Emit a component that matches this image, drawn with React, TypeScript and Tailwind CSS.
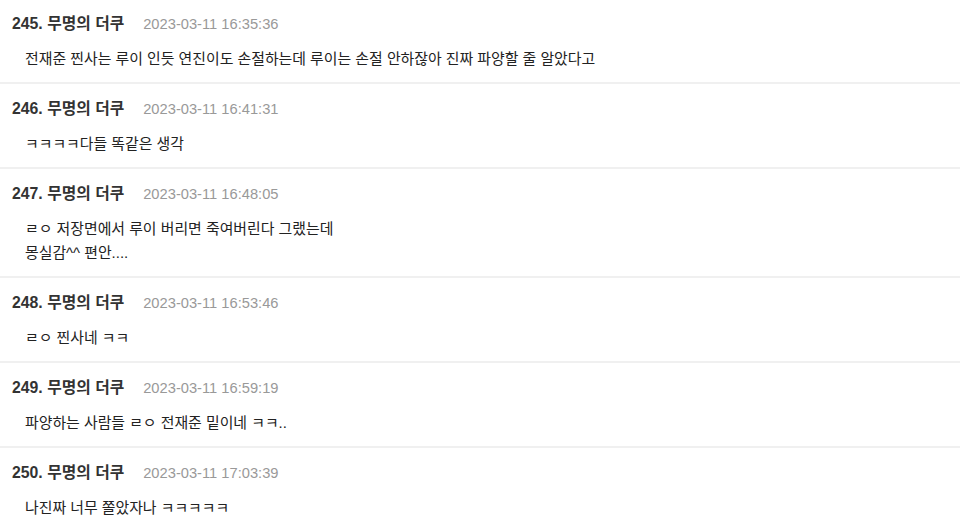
import React from "react";

const items = [
  { n: 245, t: "2023-03-11 16:35:36", body: ["전재준 찐사는 루이 인듯 연진이도 손절하는데 루이는 손절 안하잖아 진짜 파양할 줄 알았다고"] },
  { n: 246, t: "2023-03-11 16:41:31", body: ["ㅋㅋㅋㅋ다들 똑같은 생각"] },
  { n: 247, t: "2023-03-11 16:48:05", body: ["ㄹㅇ 저장면에서 루이 버리면 죽여버린다 그랬는데", "몽실감^^ 편안...."] },
  { n: 248, t: "2023-03-11 16:53:46", body: ["ㄹㅇ 찐사네 ㅋㅋ"] },
  { n: 249, t: "2023-03-11 16:59:19", body: ["파양하는 사람들 ㄹㅇ 전재준 밑이네 ㅋㅋ.."] },
  { n: 250, t: "2023-03-11 17:03:39", body: ["나진짜 너무 쫄았자나 ㅋㅋㅋㅋㅋ"] },
];

export default function App() {
  return (
    <div
      className="w-[960px] h-[531px] overflow-hidden bg-white"
      style={{ fontFamily: '"Liberation Sans", "Noto Sans CJK KR", sans-serif' }}
    >
      <div className="-mt-[1px]">
        {items.map((it) => (
          <div key={it.n} className="border-b-2 border-[#f0f0f0] pt-[13px] pb-[11px]">
            <div className="flex items-center h-[24px] pl-[12px]">
              <span className="text-[15.8px] font-bold text-[#333]">{it.n}. 무명의 더쿠</span>
              <span className="ml-[19px] text-[14.7px] text-[#999]">{it.t}</span>
            </div>
            <div className="mt-[11px] pl-[25px] text-[14.9px] leading-[24px] text-[#222]">
              {it.body.map((l, i) => (
                <div key={i}>{l}</div>
              ))}
            </div>
          </div>
        ))}
      </div>
    </div>
  );
}
